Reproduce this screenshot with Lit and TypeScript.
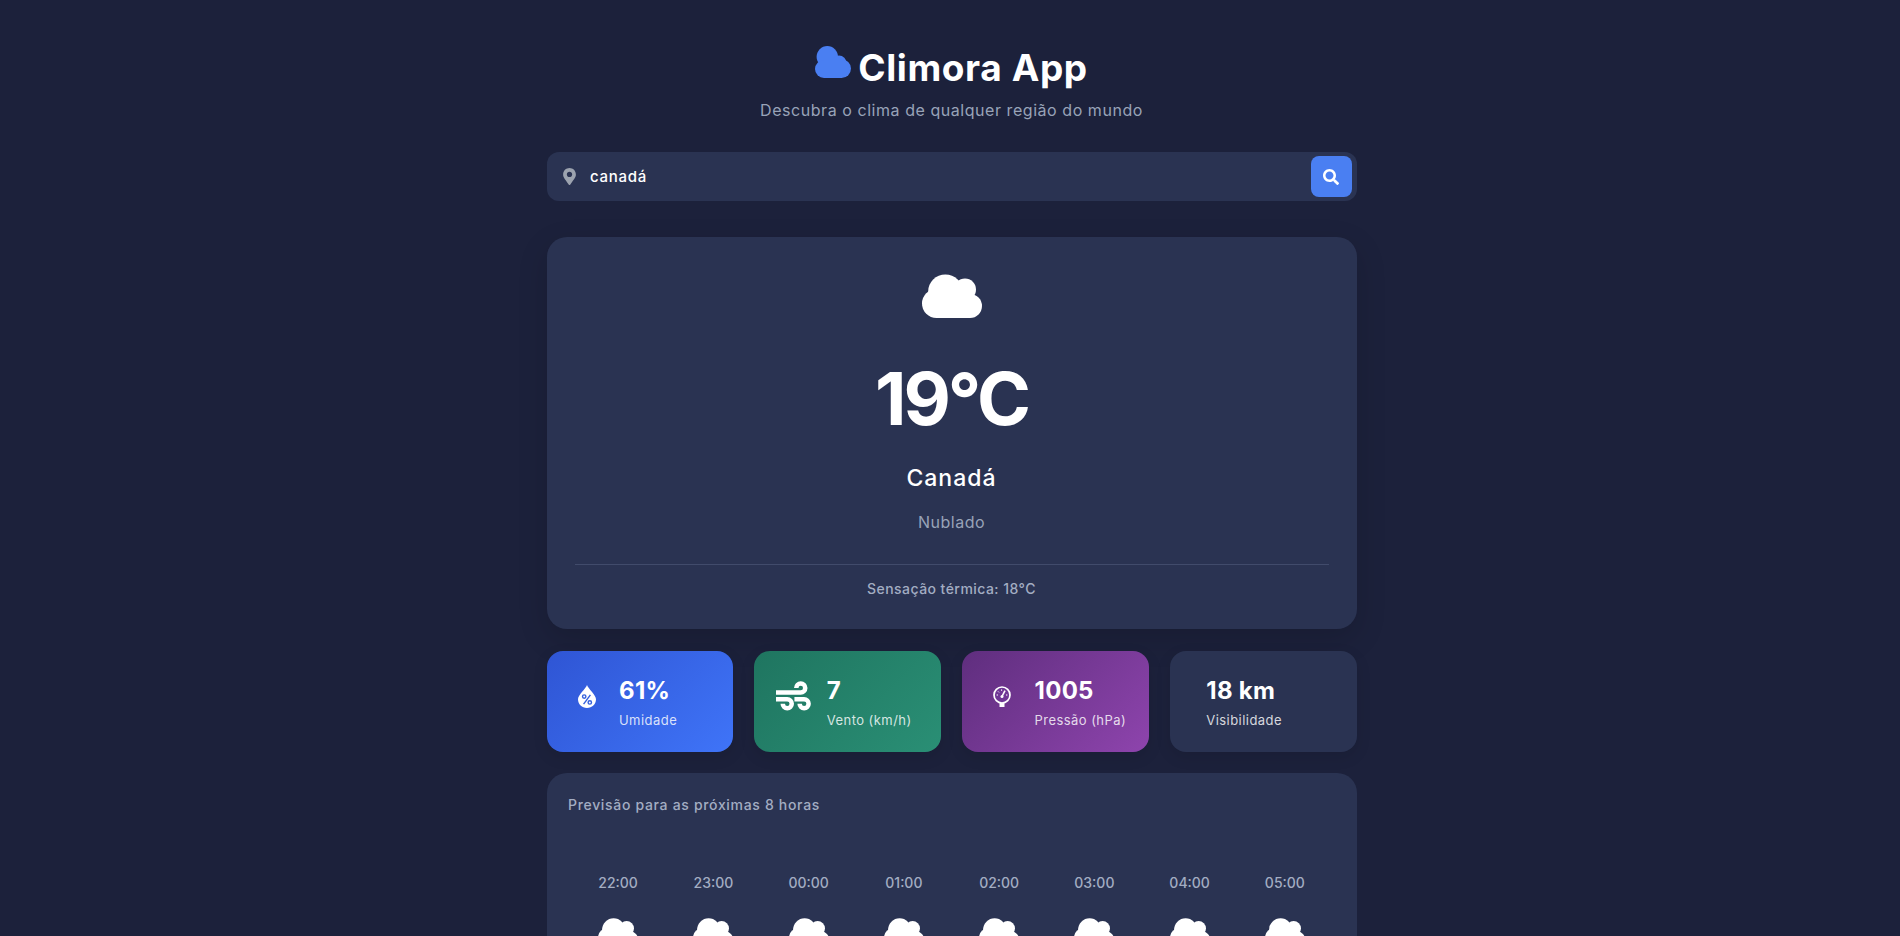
import { css, html, LitElement, svg } from 'lit';
import { customElement } from 'lit/decorators.js';

const PIN =
  'M172.268 501.67C26.97 291.031 0 269.413 0 192 0 85.961 85.961 0 192 0s192 85.961 192 192c0 77.413-26.97 99.031-172.268 309.67-9.535 13.774-29.93 13.773-39.464 0zM192 272c44.183 0 80-35.817 80-80s-35.817-80-80-80-80 35.817-80 80 35.817 80 80 80z';
const SEARCH =
  'M505 442.7L405.3 343c-4.5-4.5-10.6-7-17-7H372c27.6-35.3 44-79.7 44-128C416 93.1 322.9 0 208 0S0 93.1 0 208s93.1 208 208 208c48.3 0 92.7-16.4 128-44v16.3c0 6.4 2.5 12.5 7 17l99.7 99.7c9.4 9.4 24.6 9.4 33.9 0l28.3-28.3c9.4-9.4 9.4-24.6.1-34zM208 336c-70.7 0-128-57.2-128-128 0-70.7 57.2-128 128-128 70.7 0 128 57.2 128 128 0 70.7-57.2 128-128 128z';

const HOURS = ['22:00', '23:00', '00:00', '01:00', '02:00', '03:00', '04:00', '05:00'];

const dropIcon = svg`<svg class="glyph" width="18" height="23" viewBox="0 0 18 23">
  <path fill="#fff" d="M9 0C10 3.5 18 10 18 14.2 18 19 14 23 9 23S0 19 0 14.2C0 10 8 3.5 9 0z"/>
  <g fill="none" stroke="#3460dd" stroke-width="1.4">
    <circle cx="6.2" cy="11.6" r="1.7"/><circle cx="11.8" cy="17.4" r="1.7"/><path d="M12.4 9.8 5.6 19.2"/>
  </g>
</svg>`;

const windIcon = svg`<svg class="glyph" width="36" height="36" viewBox="0 0 512 512">
  <g fill="none" stroke="#fff" stroke-width="64">
    <path d="M0 192H352a64 64 0 1 0-64-64"/>
    <path d="M0 288H160a64 64 0 1 1-64 64"/>
    <path d="M262 288H400a64 64 0 1 1-64 64"/>
  </g>
</svg>`;

const gaugeIcon = svg`<svg class="glyph" width="18" height="21" viewBox="0 0 18 21">
  <path fill="#fff" d="M6.5 16h5v5h-5z"/>
  <circle cx="9" cy="9" r="8" fill="#6f3795" stroke="#fff" stroke-width="1.7"/>
  <path d="M9.2 10 12 4.6" stroke="#fff" stroke-width="1.6" fill="none"/>
  <circle cx="9" cy="10.4" r="1.5" fill="#fff"/>
  <path d="M3.6 9h1.4M5 5.4l1 1M8.6 3.4v1.4M14.4 9H13" stroke="#fff" stroke-width="1" fill="none"/>
</svg>`;

@customElement('app-root')
export class AppRoot extends LitElement {
  static override styles = css`
    :host {
      display: block;
      height: 936px;
      overflow: hidden;
      box-sizing: border-box;
      padding: 41px 0 0 3px;
      background: #1c213b;
      color: #fff;
      font-family: Inter, 'Noto Sans', sans-serif;
    }

    .container {
      width: 810px;
      margin: 0 auto;
    }

    .brand {
      display: flex;
      justify-content: center;
      align-items: center;
      gap: 7px;
    }

    .brand svg {
      margin-bottom: 12px;
    }

    h1 {
      margin: 0;
      font-size: 37px;
      line-height: 54px;
      font-weight: 700;
      letter-spacing: 0.6px;
    }

    .tagline {
      margin: 3px 0 0;
      text-align: center;
      font-size: 16px;
      line-height: 24px;
      font-weight: 400;
      color: #98a3b8;
      letter-spacing: 0.55px;
    }

    .search {
      display: flex;
      align-items: center;
      height: 49px;
      margin-top: 30px;
      padding: 4px 5px 4px 16px;
      box-sizing: border-box;
      background: #2a3352;
      border-radius: 12px;
    }

    .search input {
      flex: 1;
      min-width: 0;
      margin-left: 14.5px;
      border: 0;
      outline: 0;
      padding: 0;
      background: transparent;
      color: #fff;
      font: 500 15px/21px Inter, 'Noto Sans', sans-serif;
      letter-spacing: 0.7px;
    }

    .search button {
      display: flex;
      align-items: center;
      justify-content: center;
      width: 41px;
      height: 41px;
      padding: 0;
      border: 0;
      border-radius: 8px;
      background: #4a7ff2;
    }

    .current {
      margin-top: 36px;
      padding: 37px 28px 30px;
      background: #2a3352;
      border-radius: 20px;
      box-shadow: 0 10px 30px rgba(0, 0, 0, 0.15);
      text-align: center;
    }

    .current svg {
      display: block;
      margin: 0 auto;
    }

    .temp {
      margin-top: 36px;
      font-size: 73px;
      line-height: 90px;
      font-weight: 700;
      letter-spacing: -3px;
    }

    .place {
      margin-top: 19px;
      font-size: 23px;
      line-height: 30px;
      font-weight: 500;
      letter-spacing: 1px;
    }

    .desc {
      margin-top: 17px;
      font-size: 16px;
      line-height: 24px;
      font-weight: 400;
      color: #98a3b8;
      letter-spacing: 0.5px;
    }

    .feels {
      margin-top: 30px;
      padding-top: 13px;
      border-top: 1px solid #414b6b;
      font-size: 14px;
      line-height: 21px;
      font-weight: 500;
      color: #a3adc2;
      letter-spacing: 0.45px;
    }

    .stats {
      display: grid;
      grid-template-columns: repeat(4, minmax(0, 1fr));
      gap: 21px;
      margin-top: 22px;
    }

    .stat {
      display: flex;
      align-items: center;
      gap: 14.5px;
      height: 101px;
      padding: 0 22px 1px;
      box-sizing: border-box;
      border-radius: 16px;
      box-shadow: 0 5px 15px rgba(0, 0, 0, 0.1);
    }

    .humidity {
      background: linear-gradient(135deg, #2f55d4, #3f74f8);
    }

    .wind {
      background: linear-gradient(135deg, #1f7560, #2a8f75);
    }

    .pressure {
      background: linear-gradient(135deg, #5f2e7e, #8e44ad);
    }

    .visibility {
      background: #2a3352;
    }

    .icon {
      display: flex;
      justify-content: center;
      flex: none;
      width: 36px;
      margin-bottom: 9px;
    }

    .visibility .icon {
      width: 0;
    }

    .value {
      font-size: 24px;
      line-height: 36px;
      font-weight: 700;
      letter-spacing: 0.3px;
    }

    .label {
      margin-top: 1px;
      font-size: 13px;
      line-height: 20px;
      white-space: nowrap;
      color: rgba(255, 255, 255, 0.82);
      letter-spacing: 0.45px;
    }

    .forecast {
      margin-top: 21px;
      padding: 21px 21px 80px;
      background: #2a3352;
      border-radius: 20px;
    }

    h2 {
      margin: 0;
      padding-left: 0.5px;
      font-size: 14px;
      line-height: 21px;
      font-weight: 500;
      color: #a3adc2;
      letter-spacing: 0.68px;
    }

    .hours {
      display: grid;
      grid-template-columns: repeat(8, 1fr);
      margin-top: 57px;
      padding: 0 3px;
    }

    .hour {
      display: flex;
      flex-direction: column;
      align-items: center;
      gap: 25px;
      font-size: 14px;
      line-height: 21px;
      font-weight: 500;
      color: #a3adc2;
    }
  `;

  // cloud built from overlapping round lobes, 60x44 in its own units
  private cloud(width: number, height: number) {
    return html`<svg width=${width} height=${height} viewBox="0 0 60 44">
      <g fill="#fff">
        <circle cx="23.4" cy="17.7" r="17.3" />
        <circle cx="43" cy="15.6" r="11" />
        <circle cx="14.5" cy="29.4" r="14.5" />
        <circle cx="48" cy="32" r="12" />
        <path d="M14 24h34v20H14z" />
      </g>
    </svg>`;
  }

  private stat(kind: string, icon: unknown, value: string, label: string) {
    return html`
      <div class="stat ${kind}">
        <div class="icon">${icon}</div>
        <div>
          <div class="value">${value}</div>
          <div class="label">${label}</div>
        </div>
      </div>
    `;
  }

  override render() {
    return html`
      <div class="container">
        <div class="brand">
          <svg width="36" height="32" viewBox="0 0 36 32">
            <g fill="#4a7ff2">
              <circle cx="12.3" cy="10.7" r="10.7" />
              <circle cx="24" cy="17" r="7.5" />
              <circle cx="26.6" cy="22.6" r="9.4" />
              <circle cx="9" cy="23" r="9" />
              <path d="M9 14h18v18H9z" />
            </g>
          </svg>
          <h1>Climora App</h1>
        </div>
        <p class="tagline">Descubra o clima de qualquer região do mundo</p>

        <div class="search">
          <svg width="13" height="17" viewBox="0 0 384 512"><path fill="#9ca3af" d=${PIN} /></svg>
          <input type="text" .value=${'canadá'} />
          <button aria-label="Buscar">
            <svg width="16" height="16" viewBox="0 0 512 512"><path fill="#fff" d=${SEARCH} /></svg>
          </button>
        </div>

        <section class="current">
          ${this.cloud(60, 44)}
          <div class="temp">19°C</div>
          <div class="place">Canadá</div>
          <div class="desc">Nublado</div>
          <div class="feels">Sensação térmica: 18°C</div>
        </section>

        <div class="stats">
          ${this.stat('humidity', dropIcon, '61%', 'Umidade')}
          ${this.stat('wind', windIcon, '7', 'Vento (km/h)')}
          ${this.stat('pressure', gaugeIcon, '1005', 'Pressão (hPa)')}
          ${this.stat('visibility', null, '18 km', 'Visibilidade')}
        </div>

        <section class="forecast">
          <h2>Previsão para as próximas 8 horas</h2>
          <div class="hours">
            ${HOURS.map((h) => html`<div class="hour"><span>${h}</span>${this.cloud(40, 29.3)}</div>`)}
          </div>
        </section>
      </div>
    `;
  }
}
